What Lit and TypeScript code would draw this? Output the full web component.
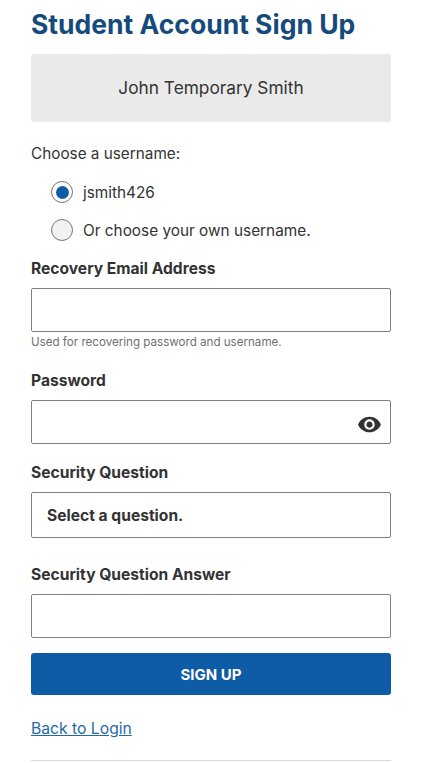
import { LitElement, html, css } from "lit";
import { customElement } from "lit/decorators.js";

@customElement("app-root")
export class AppRoot extends LitElement {
  static styles = css`
    :host { display: block; background: #fff; height: 763px; overflow: hidden; font-family: Inter, "Liberation Sans", sans-serif; color: #333; }
    * { box-sizing: border-box; }
    .page { width: 360px; margin-left: 31px; display: flex; flex-direction: column; }
    h1 { margin: 8px 0 0; font-size: 26.5px; line-height: 32px; font-weight: 700; color: #154a7d; white-space: nowrap; }
    .name { margin-top: 14px; height: 68px; padding-bottom: 1px; background: #eaeaea; border-radius: 2px; display: flex; align-items: center; justify-content: center; font-size: 17.3px; }
    .choose { margin-top: 22px; font-size: 15.3px; line-height: 20px; }
    .radios { display: flex; flex-direction: column; gap: 16px; margin-top: 17px; padding-left: 20px; }
    .radio { display: flex; align-items: center; gap: 10px; font-size: 15.35px; height: 22px; }
    .dot { width: 22px; height: 22px; border-radius: 50%; border: 1px solid #767676; background: #f2f2f2; flex: none; display: flex; align-items: center; justify-content: center; }
    .dot.on { background: #fff; }
    .dot.on::after { content: ""; width: 13px; height: 13px; border-radius: 50%; background: #0f5ca6; }
    .l { display: block; font-size: 15.6px; font-weight: 700; line-height: 20px; }
    .field { display: flex; flex-direction: column; }
    .box { display: block; width: 100%; height: 44px; border: 1px solid #808080; border-radius: 2px; background: #fff; font: inherit; padding: 0 15px; outline: none; }
    .ctl { position: relative; margin-top: 10px; }
    .eye { position: absolute; right: 9px; top: 12px; width: 25px; height: 25px; display: block; fill: #333; }
    select.box { height: 46px; appearance: none; -webkit-appearance: none; font-size: 15.6px; font-weight: 700; color: #333; }
    .hint { margin-top: 3px; font-size: 11.6px; line-height: 14px; color: #6f6f6f; }
    .btn { margin-top: 15px; height: 42px; border: 0; border-radius: 3px; background: #0f5ca6; color: #fff; font: inherit; font-size: 15px; font-weight: 700; }
    a { margin-top: 24px; font-size: 15.7px; line-height: 20px; color: #1f6aa5; text-decoration: underline; align-self: flex-start; }
    hr { margin: 21px 0 0; border: 0; border-top: 1px solid #d9d9d9; width: 100%; }
    .f1 { margin-top: 17px; }
    .f2 { margin-top: 21px; }
    .f3 { margin-top: 18px; }
    .f4 { margin-top: 26px; }
    .f1 .l, .f2 .l, .f3 .l, .f4 .l { position: relative; top: 1px; }
  `;

  render() {
    return html`
      <div class="page">
        <h1>Student Account Sign Up</h1>
        <div class="name">John Temporary Smith</div>
        <div class="choose">Choose a username:</div>
        <div class="radios">
          <div class="radio"><span class="dot on"></span>jsmith426</div>
          <div class="radio"><span class="dot"></span>Or choose your own username.</div>
        </div>
        <div class="field f1">
          <label class="l">Recovery Email Address</label>
          <div class="ctl"><input class="box" type="text" /></div>
          <div class="hint">Used for recovering password and username.</div>
        </div>
        <div class="field f2">
          <label class="l">Password</label>
          <div class="ctl">
            <input class="box" type="password" />
            <svg class="eye" viewBox="0 0 24 24"><path d="M12 4.5C7 4.5 2.73 7.61 1 12c1.73 4.39 6 7.5 11 7.5s9.27-3.11 11-7.5c-1.73-4.39-6-7.5-11-7.5zM12 17c-2.76 0-5-2.24-5-5s2.24-5 5-5 5 2.24 5 5-2.24 5-5 5zm0-8c-1.66 0-3 1.34-3 3s1.34 3 3 3 3-1.34 3-3-1.34-3-3-3z"/></svg>
          </div>
        </div>
        <div class="field f3">
          <label class="l">Security Question</label>
          <div class="ctl"><select class="box"><option>Select a question.</option></select></div>
        </div>
        <div class="field f4">
          <label class="l">Security Question Answer</label>
          <div class="ctl"><input class="box" type="text" /></div>
        </div>
        <button class="btn">SIGN UP</button>
        <a href="#">Back to Login</a>
        <hr />
      </div>
    `;
  }
}
